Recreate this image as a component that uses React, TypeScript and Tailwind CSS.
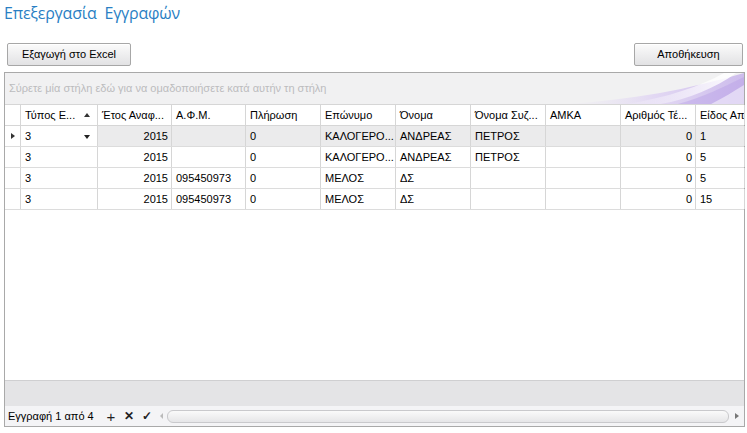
import React from "react";

const cols = [
  { w: 77, label: "Τύπος Ε..." },
  { w: 74, label: "Έτος Αναφ..." },
  { w: 74, label: "Α.Φ.Μ." },
  { w: 75, label: "Πλήρωση" },
  { w: 75, label: "Επώνυμο" },
  { w: 75, label: "Όνομα" },
  { w: 75, label: "Όνομα Συζ..." },
  { w: 75, label: "ΑΜΚΑ" },
  { w: 75, label: "Αριθμός Τέ..." },
  { w: 49, label: "Είδος Απο" },
];

const rightCols = [1, 8];

const rows: string[][] = [
  ["3", "2015", "", "0", "ΚΑΛΟΓΕΡΟ...", "ΑΝΔΡΕΑΣ", "ΠΕΤΡΟΣ", "", "0", "1"],
  ["3", "2015", "", "0", "ΚΑΛΟΓΕΡΟ...", "ΑΝΔΡΕΑΣ", "ΠΕΤΡΟΣ", "", "0", "5"],
  ["3", "2015", "095450973", "0", "ΜΕΛΟΣ", "ΔΣ", "", "", "0", "5"],
  ["3", "2015", "095450973", "0", "ΜΕΛΟΣ", "ΔΣ", "", "", "0", "15"],
];

const font = { fontFamily: "'Liberation Sans', Arial, sans-serif" };

function Btn({ children, w }: { children: React.ReactNode; w: string }) {
  return (
    <div
      className={`${w} h-[23px] flex items-center justify-center rounded-[2px] border border-[#a7a7a7] bg-gradient-to-b from-[#fbfbfb] to-[#e2e2e4] text-[11px] text-black shadow-[inset_0_1px_0_#ffffff]`}
    >
      {children}
    </div>
  );
}

export default function App() {
  return (
    <div className="w-[747px] h-[433px] bg-white relative overflow-hidden" style={font}>
      <div
        className="pl-[4px] pt-[1px] h-[43px] text-[16px] text-[#2a7fc4]"
        style={{ fontFamily: "'Open Sans', 'Liberation Sans', sans-serif", fontWeight: 400 }}
      >
        <span className="inline-block tracking-[-0.2px]">Επεξεργασία&nbsp; Εγγραφών</span>
      </div>
      <div className="flex justify-between pl-[7px] pr-[4px] h-[29px]">
        <Btn w="w-[124px]">Εξαγωγή στο Excel</Btn>
        <Btn w="w-[109px]">Αποθήκευση</Btn>
      </div>
      <div className="ml-[4px] w-[741px] h-[355px] border border-[#a9a9a9] flex flex-col">
        {/* group panel */}
        <div className="relative h-[32px] bg-[#f1f1f2] border-b border-[#d6d6d6] flex items-center pl-[4px] overflow-hidden">
          <span className="text-[11px] text-[#bcbcbe] relative z-10">
            Σύρετε μία στήλη εδώ για να ομαδοποιήσετε κατά αυτήν τη στήλη
          </span>
          <svg className="absolute right-0 top-0" width="220" height="32" viewBox="0 0 220 32">
            <defs>
              <linearGradient id="g1" x1="0" y1="0" x2="1" y2="0">
                <stop offset="0" stopColor="#f1f1f2" stopOpacity="0" />
                <stop offset="0.55" stopColor="#e2d8f3" />
                <stop offset="1" stopColor="#cdbcec" />
              </linearGradient>
              <linearGradient id="g2" x1="0" y1="0" x2="1" y2="0">
                <stop offset="0" stopColor="#ffffff" stopOpacity="0" />
                <stop offset="1" stopColor="#ffffff" stopOpacity="0.95" />
              </linearGradient>
            </defs>
            <path d="M20 32 C 90 30, 160 18, 220 0 L 220 32 Z" fill="url(#g1)" />
            <path d="M95 32 C 140 26, 175 14, 200 0 L 212 0 C 190 16, 160 28, 130 32 Z" fill="url(#g2)" />
            <path d="M150 32 C 175 26, 200 14, 220 4 L 220 32 Z" fill="#b7a0e6" opacity="0.45" />
            <path d="M185 32 C 198 26, 210 18, 220 12 L 220 32 Z" fill="#ffffff" opacity="0.5" />
          </svg>
        </div>
        {/* header */}
        <div className="flex h-[21px] border-b border-[#d6d6d6] bg-white">
          <div className="w-[16px] shrink-0 border-r border-[#d6d6d6]" />
          {cols.map((c, i) => (
            <div
              key={i}
              className="shrink-0 border-r border-[#d6d6d6] flex items-center pl-[4px] text-[11px] text-black whitespace-nowrap overflow-hidden relative"
              style={{ width: c.w }}
            >
              {c.label}
              {i === 0 && (
                <span className="absolute right-[7px] top-[8px] w-0 h-0 border-l-[3px] border-r-[3px] border-b-[4px] border-l-transparent border-r-transparent border-b-[#333]" />
              )}
            </div>
          ))}
        </div>
        {/* rows */}
        {rows.map((r, ri) => (
          <div key={ri} className={`flex h-[21px] border-b border-[#dcdcdc] ${ri === 0 ? "bg-[#ebebec]" : "bg-white"}`}>
            <div className="w-[16px] shrink-0 border-r border-[#d6d6d6] relative bg-white">
              {ri === 0 && (
                <span className="absolute left-[6px] top-[7px] w-0 h-0 border-t-[3px] border-b-[3px] border-l-[4px] border-t-transparent border-b-transparent border-l-[#333]" />
              )}
            </div>
            {r.map((v, ci) => (
              <div
                key={ci}
                className={`shrink-0 border-r border-[#d6d6d6] flex items-center text-[11px] text-black whitespace-nowrap overflow-hidden relative ${
                  rightCols.includes(ci) ? "justify-end pr-[3px]" : "pl-[4px]"
                } ${ri === 0 && ci === 0 ? "bg-white" : ""}`}
                style={{ width: cols[ci].w }}
              >
                {v}
                {ri === 0 && ci === 0 && (
                  <span className="absolute right-[7px] top-[9px] w-0 h-0 border-l-[3.5px] border-r-[3.5px] border-t-[4px] border-l-transparent border-r-transparent border-t-[#222]" />
                )}
              </div>
            ))}
          </div>
        ))}
        <div className="flex-1 bg-white" />
        {/* footer band */}
        <div className="h-[26px] bg-[#e4e4e6] border-t border-[#cfcfd1]" />
        {/* nav bar */}
        <div className="h-[20px] bg-[#f4f4f6] flex items-center text-[11px] text-black">
          <span className="pl-[3px] w-[97px]">Εγγραφή 1 από 4</span>
          <span className="w-[18px] text-[15px] leading-none text-[#222] text-center">+</span>
          <span className="w-[18px] text-[12px] leading-none font-bold text-[#222] text-center">✕</span>
          <span className="w-[18px] text-[12px] leading-none font-bold text-[#222] text-center">✓</span>
          <span className="w-[10px] flex justify-center">
            <span className="w-0 h-0 border-t-[3px] border-b-[3px] border-r-[3px] border-t-transparent border-b-transparent border-r-[#bbb]" />
          </span>
          <div className="h-[13px] w-[562px] ml-[1px] rounded-[6px] border border-[#c9c9cc] bg-gradient-to-b from-[#fafafa] to-[#e6e6e8]" />
          <span className="flex-1 flex justify-center">
            <span className="w-0 h-0 border-t-[3.5px] border-b-[3.5px] border-l-[4px] border-t-transparent border-b-transparent border-l-[#777]" />
          </span>
        </div>
      </div>
    </div>
  );
}
